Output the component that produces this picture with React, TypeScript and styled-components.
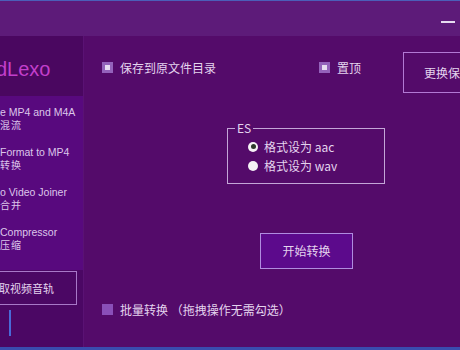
import React from 'react';
import styled, { createGlobalStyle } from 'styled-components';

const GlobalStyle = createGlobalStyle`
  html, body { margin: 0; padding: 0; background: #540b6a; }
  body { font-family: "Noto Sans CJK SC", "Liberation Sans", sans-serif; }
`;

const menu = [
    { en: 'e MP4 and M4A', zh: '混流' },
    { en: 'Format to MP4', zh: '转换' },
    { en: 'o Video Joiner', zh: '合并' },
    { en: 'Compressor', zh: '压缩' },
];

export default function App() {
    return (
        <>
            <GlobalStyle />
            <Window>
                <TitleBar>
                    <MinButton />
                </TitleBar>
                <Body>
                    <Sidebar>
                        <Logo>dLexo</Logo>
                        <Menu>
                            {menu.map((m) => (
                                <MenuItem key={m.en}>
                                    <MenuEn>{m.en}</MenuEn>
                                    <MenuZh>{m.zh}</MenuZh>
                                </MenuItem>
                            ))}
                        </Menu>
                        <SideBottom>
                            <SideButton>取视频音轨</SideButton>
                            <Caret />
                        </SideBottom>
                    </Sidebar>
                    <Content>
                        <TopRow>
                            <CheckLabel $width={217}>
                                <Check $checked />
                                保存到原文件目录
                            </CheckLabel>
                            <CheckLabel $width={84}>
                                <Check $checked />
                                置顶
                            </CheckLabel>
                            <OutlineButton>更换保存目录</OutlineButton>
                        </TopRow>
                        <Group>
                            <Legend>ES</Legend>
                            <RadioRow>
                                <Radio $checked />
                                格式设为 aac
                            </RadioRow>
                            <RadioRow>
                                <Radio />
                                格式设为 wav
                            </RadioRow>
                        </Group>
                        <StartButton>开始转换</StartButton>
                        <BatchRow>
                            <Check />
                            批量转换 （拖拽操作无需勾选）
                        </BatchRow>
                    </Content>
                </Body>
            </Window>
        </>
    );
}

const Window = styled.div`
  width: 460px;
  height: 350px;
  display: flex;
  flex-direction: column;
  overflow: hidden;
  border-top: 1px solid #4b5fb8;
  border-bottom: 3px solid #3a4cae;
  box-sizing: border-box;
  color: #e4d4ee;
`;

const TitleBar = styled.div`
  height: 35px;
  flex: none;
  background: #5d1b79;
  display: flex;
  justify-content: flex-end;
  align-items: flex-start;
`;

const MinButton = styled.div`
  width: 14px;
  height: 2px;
  margin: 20px 5px 0 0;
  background: #e6dcf0;
`;

const Body = styled.div`
  flex: 1;
  display: flex;
  min-height: 0;
`;

const Sidebar = styled.div`
  width: 83px;
  flex: none;
  display: flex;
  flex-direction: column;
  overflow: hidden;
`;

const Logo = styled.div`
  height: 60px;
  background: #4a0760;
  color: #c23fcb;
  font-family: "Liberation Sans", Arial, sans-serif;
  font-size: 20px;
  line-height: 60px;
  padding-top: 3px;
  text-indent: -4px;
  box-sizing: border-box;
  white-space: nowrap;
`;

const Menu = styled.div`
  height: 174px;
  background: #58097e;
  padding-top: 10px;
  box-sizing: border-box;
  display: flex;
  flex-direction: column;
  gap: 14px;
`;

const MenuItem = styled.div`
  display: flex;
  flex-direction: column;
  white-space: nowrap;
  height: 26px;
`;

const MenuEn = styled.span`
  font-family: "Liberation Sans", Arial, sans-serif;
  font-size: 10.5px;
  line-height: 13px;
  color: #dcc6ea;
`;

const MenuZh = styled.span`
  font-family: "Noto Sans CJK SC", serif;
  font-size: 10px;
  line-height: 12px;
  letter-spacing: 1px;
  color: #dcc6ea;
`;

const SideBottom = styled.div`
  flex: 1;
  background: #4b0764;
`;

const SideButton = styled.div`
  margin: 1px 6px 0 -10px;
  height: 34px;
  border: 1px solid #a878c8;
  box-sizing: border-box;
  font-size: 11px;
  line-height: 32px;
  padding-left: 8px;
  white-space: nowrap;
`;

const Caret = styled.div`
  width: 2px;
  height: 26px;
  margin: 5px 0 0 9px;
  background: #4a6ad8;
`;

const Content = styled.div`
  flex: 1;
  background: #540b6a;
  border-left: 1px solid #5a1274;
  overflow: hidden;
  padding: 16px 0 0 18px;
  display: flex;
  flex-direction: column;
  align-items: flex-start;
`;

const TopRow = styled.div`
  display: flex;
  align-items: center;
  height: 41px;
  white-space: nowrap;
`;

const CheckLabel = styled.label<{ $width: number }>`
  width: ${(p) => p.$width}px;
  flex: none;
  display: flex;
  align-items: center;
  gap: 7px;
  font-size: 12px;
  margin-top: -11px;
`;

const Check = styled.span<{ $checked?: boolean }>`
  width: 11px;
  height: 11px;
  flex: none;
  box-sizing: border-box;
  background: ${(p) => (p.$checked ? '#e8dcf2' : '#8a4fb8')};
  border: ${(p) => (p.$checked ? '3px solid #9462bb' : 'none')};
`;

const OutlineButton = styled.div`
  width: 110px;
  height: 41px;
  flex: none;
  border: 1px solid #b27ad4;
  box-sizing: border-box;
  font-size: 12px;
  line-height: 39px;
  padding-left: 20px;
  white-space: nowrap;
`;

const Group = styled.fieldset`
  margin: 29px 0 0 125px;
  width: 158px;
  height: 62px;
  box-sizing: border-box;
  border: 1px solid #c4a6d8;
  padding: 5px 0 0 20px;
  display: flex;
  flex-direction: column;
  gap: 4px;
`;

const Legend = styled.legend`
  font-size: 12px;
  padding: 0 2px;
  margin-left: -13px;
  line-height: 12px;
`;

const RadioRow = styled.label`
  display: flex;
  align-items: center;
  gap: 6px;
  font-size: 12px;
  line-height: 15px;
  white-space: nowrap;
`;

const Radio = styled.span<{ $checked?: boolean }>`
  width: 10px;
  height: 10px;
  border-radius: 50%;
  background: #f6f2f6;
  flex: none;
  display: flex;
  align-items: center;
  justify-content: center;
  &::after {
    content: '';
    width: 5px;
    height: 5px;
    border-radius: 50%;
    background: ${(p) => (p.$checked ? '#2c3a2a' : 'transparent')};
  }
`;

const StartButton = styled.div`
  margin: 49px 0 0 158px;
  width: 93px;
  height: 36px;
  box-sizing: border-box;
  background: #5c0a8c;
  border: 1px solid #b08ce0;
  font-size: 12px;
  line-height: 34px;
  text-align: center;
`;

const BatchRow = styled.label`
  margin-top: 32px;
  display: flex;
  align-items: center;
  gap: 7px;
  font-size: 12px;
  white-space: nowrap;
`;
